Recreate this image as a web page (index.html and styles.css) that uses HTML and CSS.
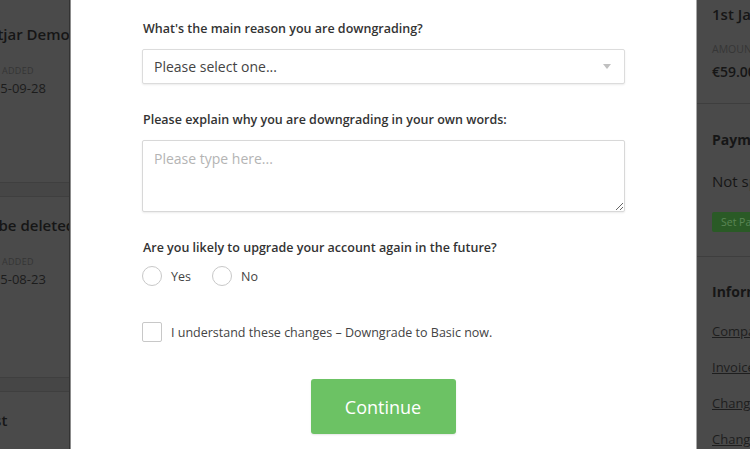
FILE: index.html
```html
<!DOCTYPE html>
<html lang="en">
<head>
<meta charset="utf-8">
<title>Downgrade</title>
<link rel="stylesheet" href="styles.css">
</head>
<body>
<div class="page">
  <aside class="left">
    <div class="card card-first">
      <div class="inner">
        <div class="site-name">Hotjar Demo site</div>
        <div class="meta-label">Date added</div>
        <div class="meta-value">2015-09-28</div>
      </div>
    </div>
    <div class="band"></div>
    <div class="card">
      <div class="inner">
        <div class="site-name">To be deleted</div>
        <div class="meta-label">Date added</div>
        <div class="meta-value">2015-08-23</div>
      </div>
    </div>
    <div class="band"></div>
    <div class="card">
      <div class="inner">
        <div class="site-name">Test</div>
      </div>
    </div>
  </aside>

  <main class="modal">
    <form class="form">
      <label class="q">What's the main reason you are downgrading?</label>
      <div class="select-wrap">
        <select class="select">
          <option>Please select one...</option>
        </select>
      </div>

      <label class="q q-gap">Please explain why you are downgrading in your own words:</label>
      <textarea class="text" placeholder="Please type here..."></textarea>

      <label class="q q-gap">Are you likely to upgrade your account again in the future?</label>
      <div class="radios">
        <label class="opt"><input type="radio" name="up" class="radio"><span>Yes</span></label>
        <label class="opt"><input type="radio" name="up" class="radio"><span>No</span></label>
      </div>

      <label class="confirm"><input type="checkbox" class="check"><span>I understand these changes – Downgrade to Basic now.</span></label>

      <div class="actions">
        <button type="button" class="btn">Continue</button>
      </div>
    </form>
  </main>

  <aside class="right">
    <div class="r-date">1st January 2017</div>
    <div class="r-label">Amount</div>
    <div class="r-amount">€59.00</div>
    <div class="r-div"></div>
    <div class="r-head">Payment method</div>
    <div class="r-big">Not specified</div>
    <div class="r-btn">Set Payment Method</div>
    <div class="r-div r-div2"></div>
    <div class="r-head r-head2">Information</div>
    <a class="r-link r-link-first">Company details</a>
    <a class="r-link">Invoice history</a>
    <a class="r-link">Change plan</a>
    <a class="r-link">Change password</a>
  </aside>
</div>
</body>
</html>
```

FILE: styles.css
```css
* { box-sizing: border-box; }
html, body { margin: 0; padding: 0; }
body {
  width: 750px;
  height: 449px;
  overflow: hidden;
  background: #4a4a4a;
  font-family: "Open Sans", "DejaVu Sans", sans-serif;
}
.page {
  display: flex;
  height: 449px;
}

/* left dimmed column */
.left {
  width: 70px;
  flex: none;
  overflow: hidden;
  background: #4a4a4a;
  border-right: 1px solid #333;
}
.card {
  height: 180px;
  padding-top: 18px;
  overflow: hidden;
}
.card-first {
  height: 182px;
  padding-top: 24px;
}
.inner {
  margin-left: -22px;
  width: 300px;
}
.band {
  height: 15px;
  background: #464646;
  border-top: 1px solid #3f3f3f;
  border-bottom: 1px solid #3f3f3f;
}
.site-name {
  margin-left: -1px;
  font-size: 15px;
  line-height: 20px;
  font-weight: 600;
  color: #161616;
  white-space: nowrap;
}
.meta-label {
  margin-top: 21px;
  margin-left: -2px;
  font-size: 9px;
  line-height: 12px;
  text-transform: uppercase;
  letter-spacing: 0.3px;
  color: #353535;
}
.meta-value {
  margin-top: 2px;
  font-size: 13px;
  line-height: 18px;
  color: #1c1c1c;
}

/* modal */
.modal {
  width: 627px;
  flex: none;
  background: #fff;
  border-left: 1px solid #8c8c8c;
  border-right: 1px solid #a8a8a8;
  padding: 19px 70px 0 71px;
}
.form {
  display: flex;
  flex-direction: column;
}
.q {
  font-size: 12.5px;
  line-height: 20px;
  font-weight: 600;
  color: #333;
  margin-bottom: 10px;
  padding-left: 1px;
}
.q-gap { margin-top: 26px; }
.select-wrap {
  position: relative;
  width: 483px;
}
.select-wrap::after {
  content: "";
  position: absolute;
  right: 14px;
  top: 15px;
  border-left: 4px solid transparent;
  border-right: 4px solid transparent;
  border-top: 5px solid #c0c0c0;
}
.select {
  appearance: none;
  -webkit-appearance: none;
  width: 483px;
  height: 35px;
  border: 1px solid #dcdcdc;
  border-radius: 2px;
  background: #fff;
  box-shadow: 0 1px 2px rgba(0,0,0,0.08);
  padding: 0 11px;
  font-family: "Open Sans", sans-serif;
  font-size: 14px;
  color: #444;
}
.text {
  width: 483px;
  height: 72px;
  border: 1px solid #d8d8d8;
  border-radius: 2px;
  box-shadow: 0 1px 2px rgba(0,0,0,0.08);
  padding: 8px 11px;
  font-family: "Open Sans", sans-serif;
  font-size: 14px;
  line-height: 20px;
  color: #444;
  resize: vertical;
}
.text::placeholder { color: #b4b4b4; }
.radios {
  display: flex;
  gap: 21px;
  margin-top: -2px;
  height: 20px;
}
.opt, .confirm {
  display: flex;
  align-items: center;
  gap: 9px;
  font-size: 12.5px;
  color: #444;
}
.radio {
  appearance: none;
  -webkit-appearance: none;
  margin: 0;
  width: 20px;
  height: 20px;
  border: 1px solid #c8c8c8;
  border-radius: 50%;
  background: #fff;
}
.confirm {
  margin-top: 36px;
  height: 20px;
}
.check {
  appearance: none;
  -webkit-appearance: none;
  margin: 0;
  width: 20px;
  height: 20px;
  border: 1px solid #c8c8c8;
  border-radius: 2px;
  background: #fff;
}
.actions {
  display: flex;
  justify-content: center;
  margin-top: 37px;
}
.btn {
  width: 145px;
  height: 55px;
  border: none;
  border-radius: 3px;
  background: #6cc264;
  color: #fff;
  font-family: "Open Sans", sans-serif;
  font-size: 18px;
  box-shadow: 0 1px 2px rgba(0,0,0,0.1);
  margin-right: 2px;
}

/* right dimmed column */
.right {
  flex: 1;
  overflow: hidden;
  white-space: nowrap;
  padding: 3px 0 0 15px;
  background: #4a4a4a;
}
.r-date {
  font-size: 15px;
  line-height: 22px;
  font-weight: 600;
  color: #161616;
}
.r-label {
  margin-top: 18px;
  font-size: 10.5px;
  line-height: 12px;
  text-transform: uppercase;
  color: #363636;
}
.r-amount {
  margin-top: 8px;
  font-size: 14px;
  line-height: 18px;
  font-weight: 600;
  color: #161616;
}
.r-div {
  margin-top: 22px;
  margin-left: -15px;
  width: 80px;
  height: 1px;
  background: #3e3e3e;
}
.r-head {
  margin-top: 26px;
  font-size: 14px;
  line-height: 20px;
  font-weight: 700;
  color: #161616;
}
.r-big {
  margin-top: 20px;
  font-size: 15px;
  line-height: 22px;
  color: #161616;
}
.r-btn {
  display: inline-block;
  margin-top: 20px;
  height: 20px;
  padding: 0 9px;
  background: #2a5a26;
  border-radius: 2px;
  font-size: 10.5px;
  line-height: 20px;
  color: #5a8655;
  vertical-align: top;
}
.r-div2 { margin-top: 24px; }
.r-head2 { margin-top: 25px; }
.r-link {
  display: block;
  margin-top: 16px;
  font-size: 13px;
  line-height: 20px;
  color: #1e1e1e;
  text-decoration: underline;
}
.r-link-first { margin-top: 19px; }
```
